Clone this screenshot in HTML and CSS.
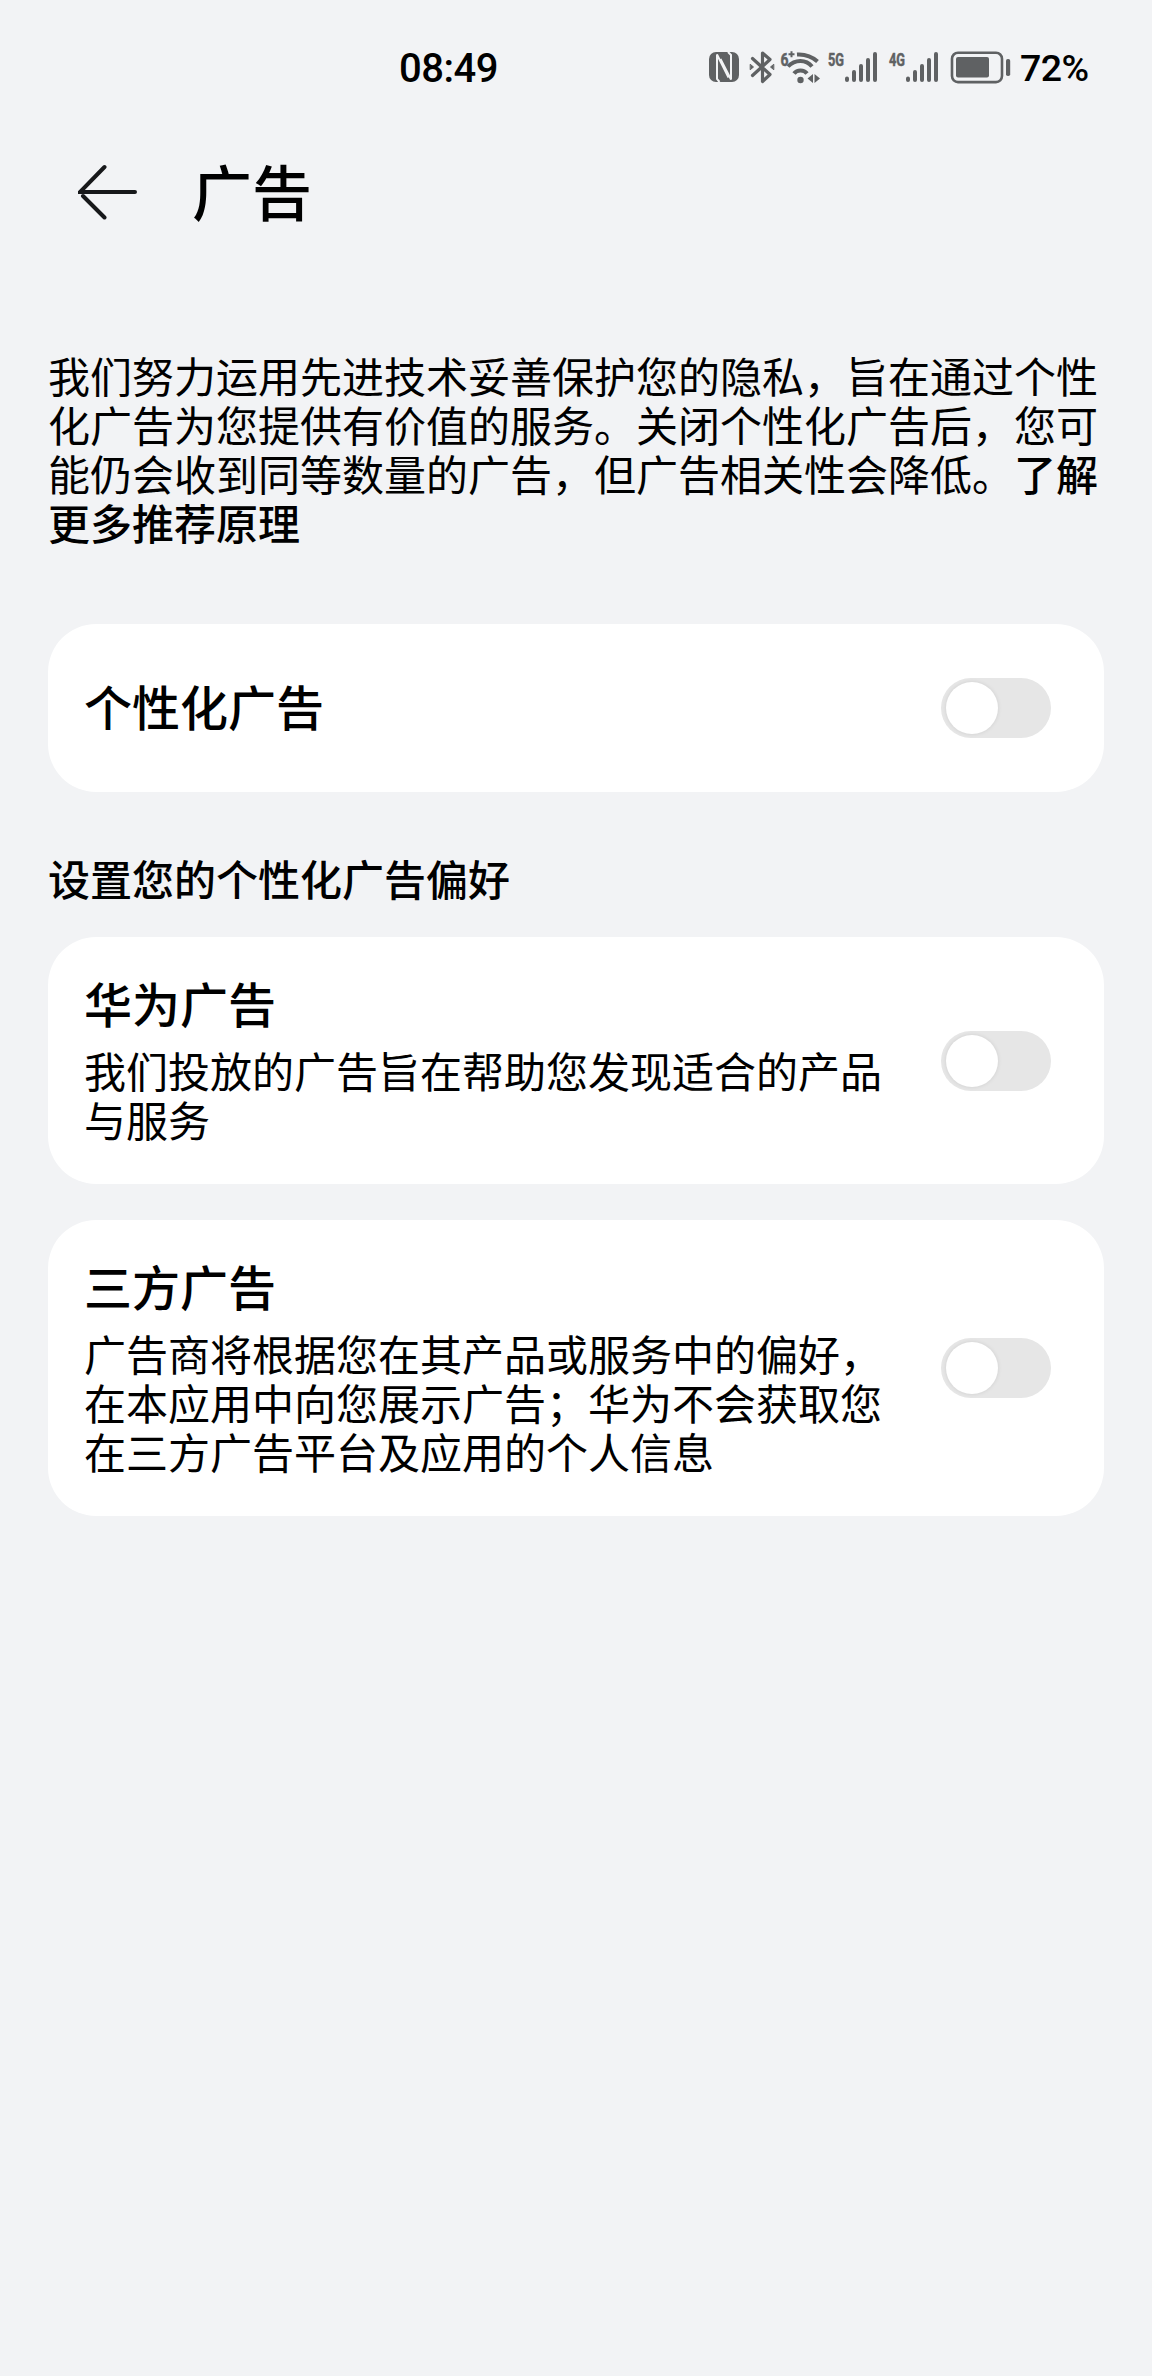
FILE: index.html
```html
<!DOCTYPE html>
<html lang="zh-CN">
<head>
    <meta charset="UTF-8">
    <title>广告</title>
    <link rel="stylesheet" href="styles.css">
</head>
<body>
    <div class="estado">
        <span class="hora">08:49</span>
        <div class="iconos">
            <svg class="nfc" width="30" height="36" viewBox="0 0 30 36">
                <rect x="0" y="2" width="30" height="30" rx="7" fill="#5f6163"/>
                <path d="M10.500 32L8 29V4.500L19.500 27.500M19 2L22 5V29.500L11.500 9" fill="none" stroke="#f2f3f5" stroke-width="2"/>
            </svg>
            <svg class="bluetooth" width="26" height="36" viewBox="0 0 26 36" fill="none" stroke="#5f6163" stroke-width="3.200" stroke-linejoin="round" stroke-linecap="round">
                <path d="M3.500 8.500L21 24.500L13.500 31.500V3L21 9.500L3.500 25.500"/>
                <path d="M1.500 14.500L4.500 17L1.500 19.500ZM24.500 14.500L21.500 17L24.500 19.500Z" fill="#5f6163" stroke-width="1"/>
            </svg>
            <svg class="wifi" width="40" height="36" viewBox="0 0 40 36" fill="none" stroke="#5f6163" stroke-width="4">
                <text x="0.500" y="15.500" class="mini" textLength="8" lengthAdjust="spacingAndGlyphs">6</text>
                <path d="M8.500 4.200H14.500M11.500 1.200V7.200" stroke-width="2"/>
                <path d="M17 4.500C25 4 32 6.500 37.500 11.500M8 16.500C15 9 26 9 32 16.500M14 23.500C17 19.500 24 19.500 27 23.500"/>
                <circle cx="20.500" cy="30" r="3.200" fill="#5f6163" stroke="none"/>
                <path d="M33 24V33L27.500 28.500ZM34.500 33V24L40 28.500Z" fill="#5f6163" stroke="none"/>
            </svg>
            <svg class="senal" width="50" height="36" viewBox="0 0 50 36">
                <text x="0" y="15.500" class="mini" textLength="16" lengthAdjust="spacingAndGlyphs">5G</text>
                <path d="M19 28.500V30M26 22V30M33 16V30M40 10V30M47 4V30" stroke="#5f6163" stroke-width="4" stroke-linecap="round"/>
            </svg>
            <svg class="senal dos" width="50" height="36" viewBox="0 0 50 36">
                <text x="0" y="15.500" class="mini" textLength="16" lengthAdjust="spacingAndGlyphs">4G</text>
                <path d="M19 28.500V30M26 22V30M33 16V30M40 10V30M47 4V30" stroke="#5f6163" stroke-width="4" stroke-linecap="round"/>
            </svg>
            <svg class="bateria" width="61" height="36" viewBox="0 0 61 36">
                <rect x="2" y="2.700" width="50" height="29.400" rx="6" fill="none" stroke="#5f6163" stroke-width="2.600"/>
                <rect x="6" y="7" width="33" height="20.500" rx="2" fill="#5f6163"/>
                <rect x="56" y="9" width="4.200" height="17" rx="1.800" fill="#5f6163"/>
            </svg>
        </div>
        <span class="porcentaje">72%</span>
    </div>

    <header class="cabecera">
        <svg class="volver" width="62" height="60" viewBox="0 0 62 60" fill="none" stroke="#17181a" stroke-width="4" stroke-linecap="round">
            <path d="M26.500 5L2 30H57M26.500 55.500L5 34"/>
        </svg>
        <h1>广告</h1>
    </header>

    <main>
        <p class="intro">我们努力运用先进技术妥善保护您的隐私，旨在通过个性化广告为您提供有价值的服务。关闭个性化广告后，您可能仍会收到同等数量的广告，但广告相关性会降低。<b>了解更多推荐原理</b></p>

        <section class="tarjeta simple">
            <h2>个性化广告</h2>
            <span class="interruptor"></span>
        </section>

        <h3>设置您的个性化广告偏好</h3>

        <section class="tarjeta huawei">
            <div class="texto">
                <h2>华为广告</h2>
                <p>我们投放的广告旨在帮助您发现适合的产品与服务</p>
            </div>
            <span class="interruptor"></span>
        </section>

        <section class="tarjeta terceros">
            <div class="texto">
                <h2>三方广告</h2>
                <p>广告商将根据您在其产品或服务中的偏好，在本应用中向您展示广告；华为不会获取您在三方广告平台及应用的个人信息</p>
            </div>
            <span class="interruptor"></span>
        </section>
    </main>
</body>
</html>
```
FILE: styles.css
```css
* {
    box-sizing: border-box;
}

body {
    margin: 0;
    min-height: 2376px;
    background-color: #f2f3f5;
    color: #000;
    font-family: "Noto Sans CJK SC", sans-serif;
}

h1, h2, h3, p {
    margin: 0;
    font-weight: 500;
}

.estado {
    display: flex;
    height: 136px;
    padding: 50px 62px 0 399px;
    font-family: Roboto, sans-serif;
    font-weight: 500;
    line-height: 37px;
}

.hora {
    font-size: 40px;
    letter-spacing: -0.5px;
}

.iconos {
    display: flex;
    margin-left: auto;
}

.iconos svg { overflow: visible; }

.bluetooth { margin-left: 10px; }

.wifi { margin-left: 5px; }

.senal { margin-left: 8px; }

.dos, .bateria { margin-left: 11px; }

.mini {
    font: 700 18px Roboto, sans-serif;
    fill: #5f6163;
    stroke: #5f6163;
    stroke-width: 0.5px;
}

.porcentaje {
    width: 70px;
    margin-left: 9px;
    font-size: 37.5px;
    letter-spacing: -0.6px;
    white-space: nowrap;
}

.cabecera {
    display: flex;
    align-items: center;
    height: 112px;
    padding-left: 78px;
}

.cabecera h1 {
    margin-left: 52px;
    padding-bottom: 5px;
    font-size: 60px;
    line-height: 80px;
}

main {
    padding: 102px 48px 0;
}

.intro {
    width: 1052px;
    height: 274px;
    font-size: 42px;
    font-weight: 400;
    line-height: 49px;
}

.intro b {
    font-weight: 500;
}

.tarjeta {
    display: flex;
    align-items: center;
    justify-content: space-between;
    padding: 0 53px 0 36px;
    border-radius: 48px;
    background-color: #fff;
}

.tarjeta h2 {
    padding-bottom: 6px;
    font-size: 48px;
    line-height: 56px;
}

.tarjeta p {
    margin-top: 9px;
    font-size: 42px;
    font-weight: 400;
    line-height: 49px;
}

.texto {
    width: 800px;
}

.simple { height: 168px; }

.huawei { height: 247px; }

.terceros {
    height: 296px;
    margin-top: 36px;
}

.texto h2 {
    margin-top: -5px;
}

h3 {
    height: 145px;
    padding-top: 61px;
    font-size: 42px;
    line-height: 49px;
}

.interruptor {
    width: 110px;
    height: 60px;
    padding: 4px 5px;
    border-radius: 30px;
    background-color: #e6e6e6;
}

.interruptor::before {
    content: "";
    display: block;
    width: 52px;
    height: 52px;
    border-radius: 50%;
    background-color: #fff;
    box-shadow: 0 0 4px rgba(0, 0, 0, 0.1);
}
```
